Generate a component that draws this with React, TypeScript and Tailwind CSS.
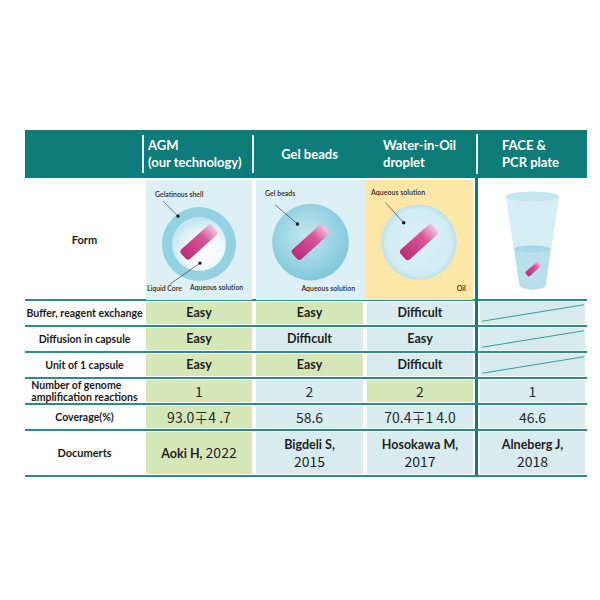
import React from 'react';

const cols = 'grid grid-cols-[119px_110px_111px_110px_3px_109px]';
const sans = "font-['Lato','Open_Sans',sans-serif]";
const jp = "font-['Noto_Sans_CJK_JP','Noto_Sans',sans-serif]";

type Tone = 'g' | 'b';

const toneClass: Record<Tone, string> = {
  g: 'bg-[#d5e7b7]',
  b: 'bg-[#d8ecf0]',
};

const Pill: React.FC<{ cx: number; cy: number; len: number; w: number; id: string }> = ({ cx, cy, len, w, id }) => (
  <g transform={`translate(${cx} ${cy}) rotate(-42)`}>
    <defs>
      <linearGradient id={id} x1="0" x2="1" y1="0" y2="0">
        <stop offset="0" stopColor="#bd2c78" />
        <stop offset="0.65" stopColor="#d8559a" />
        <stop offset="1" stopColor="#f4c6de" />
      </linearGradient>
    </defs>
    <rect x={-len / 2} y={-w / 2} width={len} height={w} rx={w / 4} fill={`url(#${id})`} />
  </g>
);

const Note: React.FC<{ x: number; y: number; children: React.ReactNode }> = ({ x, y, children }) => (
  <text x={x} y={y} fontSize="6.9" fill="#2a2a2a" fontFamily="Lato, sans-serif" fontWeight="600">
    {children}
  </text>
);

const Pointer: React.FC<{ x1: number; y1: number; x2: number; y2: number }> = ({ x1, y1, x2, y2 }) => (
  <g>
    <line x1={x1} y1={y1} x2={x2} y2={y2} stroke="#222" strokeWidth="0.6" />
    <circle cx={x2} cy={y2} r="1.7" fill="#111" />
  </g>
);

const AgmArt = () => (
  <svg viewBox="0 0 106 118" className="w-full h-full">
    <defs>
      <radialGradient id="core" cx="0.6" cy="0.65" r="0.6">
        <stop offset="0" stopColor="#ffffff" />
        <stop offset="0.6" stopColor="#eef8fb" />
        <stop offset="1" stopColor="#c6e7f0" />
      </radialGradient>
    </defs>
    <circle cx="53" cy="63" r="37" fill="#93d2e1" />
    <circle cx="53" cy="63" r="27" fill="url(#core)" />
    <Pill cx={53} cy={61} len={42} w={13} id="pillA" />
    <Note x={9} y={16}>Gelatinous shell</Note>
    <Pointer x1={17} y1={20} x2={32} y2={35} />
    <Note x={1} y={110}>Liquid Core</Note>
    <Pointer x1={24} y1={103} x2={54} y2={82} />
    <Note x={44} y={109}>Aqueous solution</Note>
  </svg>
);

const GelArt = () => (
  <svg viewBox="0 0 108 118" className="w-full h-full">
    <defs>
      <radialGradient id="bead" cx="0.45" cy="0.42" r="0.6">
        <stop offset="0" stopColor="#c3e8f1" />
        <stop offset="1" stopColor="#7fc7d9" />
      </radialGradient>
    </defs>
    <circle cx="54" cy="61" r="38" fill="url(#bead)" />
    <Pill cx={54} cy={61} len={42} w={13} id="pillB" />
    <Note x={9} y={15}>Gel beads</Note>
    <Pointer x1={19} y1={24} x2={41} y2={43} />
    <Note x={45} y={109}>Aqueous solution</Note>
  </svg>
);

const OilArt = () => (
  <svg viewBox="0 0 106 118" className="w-full h-full">
    <defs>
      <radialGradient id="drop" cx="0.5" cy="0.5" r="0.5">
        <stop offset="0" stopColor="#dcf1f7" />
        <stop offset="0.85" stopColor="#d2ecf4" />
        <stop offset="1" stopColor="#b9e2ee" />
      </radialGradient>
    </defs>
    <circle cx="53" cy="61" r="37" fill="url(#drop)" />
    <Pill cx={53} cy={61} len={42} w={13} id="pillC" />
    <Note x={6} y={15}>Aqueous solution</Note>
    <Pointer x1={20} y1={22} x2={38} y2={42} />
    <Note x={90} y={109}>Oil</Note>
  </svg>
);

const CupArt = () => (
  <svg viewBox="0 0 106 118" className="w-full h-full">
    <path d="M26 15 L40 106 Q53 112 66 106 L80 15 Z" fill="#d6eef6" />
    <ellipse cx="53" cy="15" rx="27" ry="5" fill="#c4e6f1" />
    <path d="M34.5 68 L40 106 Q53 112 66 106 L71.5 68 Z" fill="#b7e0ec" />
    <ellipse cx="53" cy="68" rx="18.5" ry="3.5" fill="#a6d7e6" />
    <Pill cx={54} cy={88} len={18} w={6} id="pillD" />
  </svg>
);

const Diag = () => (
  <svg viewBox="0 0 100 24" preserveAspectRatio="none" className="absolute inset-0 w-full h-full">
    <line x1="2" y1="21" x2="99" y2="3" stroke="#3a9c98" strokeWidth="1" vectorEffect="non-scaling-stroke" />
  </svg>
);

const Cell: React.FC<{ tone: Tone; children?: React.ReactNode; diag?: boolean }> = ({ tone, children, diag }) => (
  <div className="px-[2px] py-[1px]">
    <div className={`relative h-full flex items-center justify-center text-center ${toneClass[tone]}`}>
      {diag && <Diag />}
      {children}
    </div>
  </div>
);

const Word: React.FC<{ children: React.ReactNode }> = ({ children }) => (
  <span className={`${sans} font-bold text-[12.5px] text-[#1e1e1e]`}>{children}</span>
);

const Num: React.FC<{ children: React.ReactNode }> = ({ children }) => (
  <span className={`${jp} text-[14px] leading-[18px] text-[#2a2a2a]`}>{children}</span>
);

const Ref: React.FC<{ name: string; year: string; inline?: boolean }> = ({ name, year, inline }) =>
  inline ? (
    <span className="text-[#1e1e1e] leading-[18px]">
      <span className={`${sans} font-bold text-[12.5px]`}>{name}</span>
      <span className={`${jp} text-[14px]`}> {year}</span>
    </span>
  ) : (
    <div className="flex flex-col text-[#1e1e1e]">
      <div className={`${sans} font-bold text-[12.5px] leading-[16px] h-[16px]`}>{name}</div>
      <div className={`${jp} text-[14px] leading-[16px] h-[16px]`}>{year}</div>
    </div>
  );

const Label: React.FC<{ children: React.ReactNode }> = ({ children }) => (
  <div className={`flex items-center justify-center text-center ${sans} font-bold text-[10.5px] leading-[12px] text-[#1a1a1a] whitespace-nowrap`}>
    {children}
  </div>
);

const Row: React.FC<{ label: React.ReactNode; cells: React.ReactNode[]; tall?: boolean }> = ({ label, cells, tall }) => (
  <div className={`${cols} ${tall ? 'h-[46px]' : 'h-[26px]'} border-t-2 border-[#2b8d89]`}>
    <Label>{label}</Label>
    {cells[0]}
    {cells[1]}
    {cells[2]}
    <div className="bg-[#137c78]" />
    {cells[3]}
  </div>
);

export default function App() {
  return (
    <div className="w-[600px] h-[600px] bg-white pt-[130px] pl-[25px]">
      <div className="w-[562px]">
        {/* header */}
        <div className={`${cols} h-[48px] bg-[#0e7c78] text-white ${sans} font-bold text-[13px] leading-[17px]`}>
          <div className="py-[5px]">
            <div className="h-full border-r-2 border-[#e8f4f3]" />
          </div>
          <div className="py-[5px]">
            <div className="h-full border-r-2 border-[#e8f4f3] pl-[4px] flex flex-col justify-center">
              <span>AGM</span>
              <span>(our technology)</span>
            </div>
          </div>
          <div className="flex items-center justify-center">Gel beads</div>
          <div className="flex flex-col justify-center pl-[18px]">
            <span>Water-in-Oil</span>
            <span>droplet</span>
          </div>
          <div className="py-[4px] flex justify-center">
            <div className="w-[2px] h-full bg-[#e8f4f3]" />
          </div>
          <div className="flex flex-col justify-center pl-[24px]">
            <span>FACE &amp;</span>
            <span>PCR plate</span>
          </div>
        </div>

        {/* form row */}
        <div className={`${cols} h-[121px]`}>
          <Label>
            <span className="text-[11px]">Form</span>
          </Label>
          <div className="px-[2px] pt-[2px] pb-[1px]">
            <div className="h-full bg-[#dcf0f5]">
              <AgmArt />
            </div>
          </div>
          <div className="pl-[2px] pt-[2px] pb-[1px]">
            <div className="h-full bg-[#dcf0f5]">
              <GelArt />
            </div>
          </div>
          <div className="pr-[2px] pt-[2px] pb-[1px]">
            <div className="h-full bg-[#fde7a6]">
              <OilArt />
            </div>
          </div>
          <div className="bg-[#137c78]" />
          <div className="px-[2px] pt-[2px] pb-[1px]">
            <CupArt />
          </div>
        </div>

        <Row
          label="Buffer, reagent exchange"
          cells={[
            <Cell key="a" tone="g"><Word>Easy</Word></Cell>,
            <Cell key="b" tone="g"><Word>Easy</Word></Cell>,
            <Cell key="c" tone="b"><Word>Difficult</Word></Cell>,
            <Cell key="d" tone="b" diag />,
          ]}
        />
        <Row
          label="Diffusion in capsule"
          cells={[
            <Cell key="a" tone="g"><Word>Easy</Word></Cell>,
            <Cell key="b" tone="b"><Word>Difficult</Word></Cell>,
            <Cell key="c" tone="b"><Word>Easy</Word></Cell>,
            <Cell key="d" tone="b" diag />,
          ]}
        />
        <Row
          label="Unit of 1 capsule"
          cells={[
            <Cell key="a" tone="g"><Word>Easy</Word></Cell>,
            <Cell key="b" tone="g"><Word>Easy</Word></Cell>,
            <Cell key="c" tone="b"><Word>Difficult</Word></Cell>,
            <Cell key="d" tone="b" diag />,
          ]}
        />
        <Row
          label={
            <span className="text-left">
              Number of genome
              <br />
              amplification reactions
            </span>
          }
          cells={[
            <Cell key="a" tone="g"><Num>1</Num></Cell>,
            <Cell key="b" tone="b"><Num>2</Num></Cell>,
            <Cell key="c" tone="g"><Num>2</Num></Cell>,
            <Cell key="d" tone="b"><Num>1</Num></Cell>,
          ]}
        />
        <Row
          label="Coverage(%)"
          cells={[
            <Cell key="a" tone="g"><Num>93.0∓4 .7</Num></Cell>,
            <Cell key="b" tone="b"><Num>58.6</Num></Cell>,
            <Cell key="c" tone="b"><Num>70.4∓1 4.0</Num></Cell>,
            <Cell key="d" tone="b"><Num>46.6</Num></Cell>,
          ]}
        />
        <Row
          tall
          label={<span className="text-[11px]">Documerts</span>}
          cells={[
            <Cell key="a" tone="g"><Ref name="Aoki H," year="2022" inline /></Cell>,
            <Cell key="b" tone="b"><Ref name="Bigdeli S," year="2015" /></Cell>,
            <Cell key="c" tone="b"><Ref name="Hosokawa M," year="2017" /></Cell>,
            <Cell key="d" tone="b"><Ref name="Alneberg J," year="2018" /></Cell>,
          ]}
        />
        <div className="h-[2px] bg-[#2b8d89]" />
      </div>
    </div>
  );
}
